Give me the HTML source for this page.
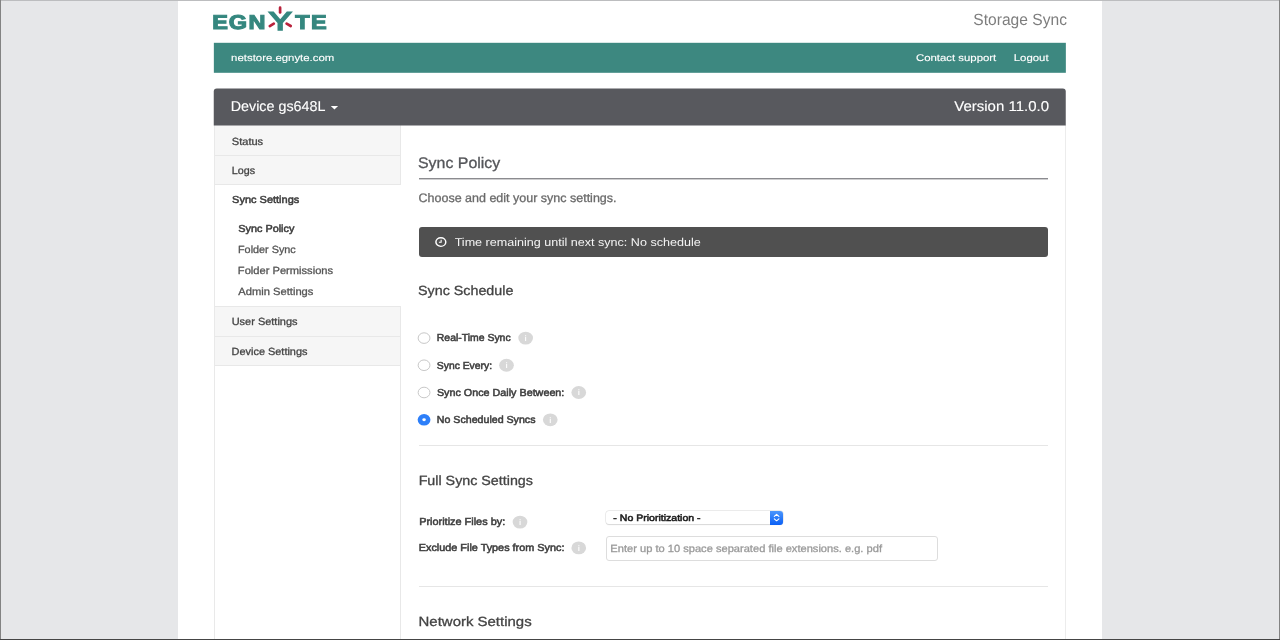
<!DOCTYPE html>
<html lang="en">
<head>
<meta charset="utf-8">
<title>Storage Sync - Sync Policy</title>
<style>
*{box-sizing:border-box;margin:0;padding:0}
html,body{width:1280px;height:640px;overflow:hidden}
body{background:#e6e7e9;font-family:"Liberation Sans",sans-serif;color:#444;font-size:11px;position:relative;text-rendering:geometricPrecision}
a{text-decoration:none}
ul{list-style:none}
h1,h2,p,label{font-weight:normal}
/* every label is placed on its own line box and stretched horizontally to the measured width */
.t{position:absolute;display:block;line-height:1;white-space:nowrap;transform-origin:0 0;-webkit-text-stroke:.3px currentColor}
.frame{position:absolute;left:0;top:0;width:1280px;height:640px;pointer-events:none;z-index:10;box-shadow:inset 0 1px 0 #bcbdbf}
.frame:before{content:"";position:absolute;left:0;top:0;width:1280px;height:640px;box-shadow:inset 1px 0 0 #838383,inset -1px 0 0 #838383}
.frame:after{content:"";position:absolute;left:0;bottom:0;width:1280px;height:1px;background:#454545}
.page{position:absolute;left:178px;top:0;width:924px;height:640px;background:#fff;will-change:transform}
.header{position:absolute;left:36px;top:0;width:852px;height:43px}
.logo{position:absolute;left:-4px;top:0;overflow:visible}
.topnav{position:absolute;left:36px;top:43px;width:852px;height:30px;background:#3d8880;transform:translate(-.15px,-.2px)}
.devicebar{position:absolute;left:36px;top:88px;width:852px;height:37px;background:#58595e;border-radius:3px 3px 0 0;transform:translate(-.25px,.5px);z-index:1}
.devicebar .caret{position:absolute;left:115px;top:16px}
.panel{position:absolute;left:36px;top:125px;width:852px;height:515px;border-left:1px solid #e9e9e9;border-right:1px solid #ececec;background:#fff}
.sidebar{position:absolute;left:0;top:0;width:186px;height:515px}
.sidebar:after{content:"";position:absolute;left:185px;top:241px;width:1px;height:274px;background:#e8e8e8}
.sidebar .item{position:absolute;left:0;width:186px;background:#f6f6f6;border-bottom:1px solid #e8e8e8;border-right:1px solid #e8e8e8}
.sidebar .group{position:absolute;left:0;width:186px;background:#fff;border-bottom:1px solid #e8e8e8}
#i_status{top:0;height:31px}
#i_logs{top:31px;height:29px}
#i_sync{top:60px;height:122px}
#i_user{top:182px;height:30px}
#i_dev{top:212px;height:29px}
.content{position:absolute;left:204px;top:0;width:629px;height:515px}
.rule{position:absolute;left:0;top:53px;width:629px;height:2px;background:linear-gradient(#8b8b8f 0,#8b8b8f 50%,rgba(139,139,143,.42) 50%,rgba(139,139,143,.42) 100%)}
.alert{position:absolute;left:0;top:102px;width:629px;height:30px;background:#505050;border-radius:3px}
.alert .clock{position:absolute;left:16px;top:9px}
.hr{position:absolute;left:0;width:629px;height:1px;background:#e6e6e6}
#hr1{top:320px}
#hr2{top:461px}
.opt,.row{position:absolute;left:0;width:629px;height:27px}
#o1{top:200px}
#o2{top:227px}
#o3{top:254px}
#o4{top:281px}
#row1{top:383px}
#row2{top:410px}
.radio,.info{position:absolute;overflow:visible}
.select{position:absolute;left:187px;top:3px;width:177px;height:13px;border-radius:3px;background:#fff;box-shadow:0 0 0 .5px #dcdcdc,0 .7px 1px rgba(0,0,0,.16)}
.select .btn{position:absolute;right:0;top:0;width:13px;height:13.5px;border-radius:0 3px 3px 0;background:linear-gradient(#4b96fc,#0b60f5)}
.select .btn svg{display:block}
.input{position:absolute;left:187px;top:1px;width:332px;height:25px;border:1px solid #ddd;border-radius:3px;background:#fff}

/* text placement: size, colour and horizontal fit of every label */
#product{left:759px;top:12px;font-size:16.2px;color:#7d7d7d;transform:translateX(0.34px) scaleX(0.9630);-webkit-text-stroke-width:0}
#domain{left:17px;top:11px;font-size:9.7px;color:#fff;transform:translateX(0.27px) scaleX(1.1754);-webkit-text-stroke-width:.12px}
#contact{left:702px;top:11px;font-size:9.7px;color:#fff;transform:translateX(0.09px) scaleX(1.1746);-webkit-text-stroke-width:.12px}
#logout{left:799px;top:11px;font-size:9.7px;color:#fff;transform:translateX(0.90px) scaleX(1.1750);-webkit-text-stroke-width:.12px}
#device{left:16px;top:11px;font-size:14.2px;color:#fff;transform:translateX(0.99px) scaleX(1.0081);-webkit-text-stroke-width:.12px}
#version{left:740px;top:11px;font-size:14.2px;color:#fff;transform:translateX(0.58px) scaleX(1.0555);-webkit-text-stroke-width:.12px}
#n_status{left:16px;top:13px;font-size:10.4px;color:#444;transform:translateX(0.86px) scaleX(1.0613)}
#n_logs{left:16px;top:11px;font-size:10.4px;color:#444;transform:translateX(0.77px) scaleX(1.0309)}
#n_sync{left:17px;top:11px;font-size:10.2px;color:#3e3e3e;transform:translateX(0.08px) scaleX(1.0784);-webkit-text-stroke-width:.52px}
#n_policy{left:23px;top:40px;font-size:10.2px;color:#3e3e3e;transform:translateX(0.30px) scaleX(1.0646);-webkit-text-stroke-width:.52px}
#n_fsync{left:23px;top:61px;font-size:10.4px;color:#555;transform:translateX(0.01px) scaleX(1.0412)}
#n_fperm{left:22px;top:82px;font-size:10.4px;color:#555;transform:translateX(0.85px) scaleX(1.0708)}
#n_admin{left:23px;top:103px;font-size:10.4px;color:#555;transform:translateX(0.35px) scaleX(1.0734)}
#n_user{left:16px;top:11px;font-size:10.4px;color:#444;transform:translateX(0.68px) scaleX(1.0558)}
#n_dev{left:16px;top:11px;font-size:10.4px;color:#444;transform:translateX(0.60px) scaleX(1.0505)}
#h1{left:-2px;top:31px;font-size:15.3px;color:#55565a;transform:translateX(0.95px) scaleX(1.0414)}
#lead{left:-1px;top:67px;font-size:12.3px;color:#6a6a6a;transform:translateX(0.56px) scaleX(1.0161)}
#alert_t{left:35px;top:11px;font-size:11.3px;color:#f4f4f4;transform:translateX(0.63px) scaleX(1.1123);-webkit-text-stroke-width:0}
#h2a{left:-1px;top:159px;font-size:13.3px;color:#444;transform:translateX(0.00px) scaleX(1.0751)}
#r1{left:17px;top:9px;font-size:10.2px;color:#3e3e3e;transform:translateX(0.79px) scaleX(1.0246);-webkit-text-stroke-width:.52px}
#r2{left:17px;top:10px;font-size:10.2px;color:#3e3e3e;transform:translateX(0.86px) scaleX(1.0150);-webkit-text-stroke-width:.52px}
#r3{left:17px;top:10px;font-size:10.2px;color:#3e3e3e;transform:translateX(0.88px) scaleX(1.0569);-webkit-text-stroke-width:.52px}
#r4{left:17px;top:10px;font-size:10.2px;color:#3e3e3e;transform:translateX(0.84px) scaleX(1.0429);-webkit-text-stroke-width:.52px}
#h2b{left:-1px;top:349px;font-size:13.3px;color:#444;transform:translateX(0.63px) scaleX(1.0738)}
#l_prio{left:0px;top:10px;font-size:10.2px;color:#3e3e3e;transform:translateX(0.14px) scaleX(1.0708);-webkit-text-stroke-width:.52px}
#l_excl{left:-1px;top:9px;font-size:10.2px;color:#3e3e3e;transform:translateX(0.76px) scaleX(1.0644);-webkit-text-stroke-width:.52px}
#sel_t{left:7px;top:3px;font-size:9.3px;color:#1c1c1c;transform:translateX(0.37px) scaleX(1.1323);-webkit-text-stroke-width:.52px}
#ph{left:3px;top:8px;font-size:10.4px;color:#9a9a9a;transform:translateX(0.37px) scaleX(1.0686)}
#h2c{left:-1px;top:490px;font-size:13.3px;color:#444;transform:translateX(0.54px) scaleX(1.1252)}
</style>
</head>
<body>
<div class="page">
  <header class="header">
    <svg class="logo" width="124" height="36" viewBox="0 0 124 36" role="img" aria-label="EGNYTE">
      <title>EGNYTE</title>
      <g stroke="#b8213b" stroke-width="2.7" stroke-linecap="round" fill="none">
        <path d="M70.1 7.7V12.4"/><path d="M59.8 26.1L63.8 23.6"/><path d="M76.6 23.6L80.7 26"/>
      </g>
      <text transform="scale(1.17 1)" x="1.90 16.13 32.83" y="28.53" font-family="Liberation Sans, sans-serif" font-weight="bold" font-size="20.06" fill="#35877f" stroke="#35877f" stroke-width="1.15" stroke-linejoin="miter">EGN<tspan x="50.24" y="30.20" font-size="25.58" font-weight="normal" stroke-width="1.6" textLength="19.61" lengthAdjust="spacingAndGlyphs">Y</tspan><tspan x="72.93 86.41" y="28.53">TE</tspan></text>
    </svg>
    <div id="product" class="t">Storage Sync</div>
  </header>
  <nav class="topnav">
    <span id="domain" class="t">netstore.egnyte.com</span>
    <a id="contact" class="t" href="#">Contact support</a>
    <a id="logout" class="t" href="#">Logout</a>
  </nav>
  <div class="devicebar">
    <a id="device" class="t" href="#">Device gs648L</a>
    <svg class="caret" width="12" height="8" viewBox="0 0 12 8"><path d="M2.05 1.4H9.35L5.7 5.1Z" fill="#fff"/></svg>
    <span id="version" class="t">Version 11.0.0</span>
  </div>
  <div class="panel">
    <ul class="sidebar">
      <li class="item" id="i_status"><a id="n_status" class="t" href="#">Status</a></li>
      <li class="item" id="i_logs"><a id="n_logs" class="t" href="#">Logs</a></li>
      <li class="group" id="i_sync"><a id="n_sync" class="t" href="#">Sync Settings</a>
        <ul>
          <li><a id="n_policy" class="t" href="#">Sync Policy</a></li>
          <li><a id="n_fsync" class="t" href="#">Folder Sync</a></li>
          <li><a id="n_fperm" class="t" href="#">Folder Permissions</a></li>
          <li><a id="n_admin" class="t" href="#">Admin Settings</a></li>
        </ul>
      </li>
      <li class="item" id="i_user"><a id="n_user" class="t" href="#">User Settings</a></li>
      <li class="item" id="i_dev"><a id="n_dev" class="t" href="#">Device Settings</a></li>
    </ul>
    <main class="content">
      <h1 id="h1" class="t">Sync Policy</h1>
      <div class="rule"></div>
      <p id="lead" class="t">Choose and edit your sync settings.</p>
      <div class="alert">
        <svg class="clock" width="12" height="12" viewBox="0 0 12 12"><ellipse cx="5.85" cy="6" rx="4.95" ry="4.35" fill="none" stroke="#fff" stroke-width="1.45"/><path d="M6.15 3.7V6.2H3.9" fill="none" stroke="#fff" stroke-width="1.1"/></svg>
        <span id="alert_t" class="t">Time remaining until next sync: No schedule</span>
      </div>
      <h2 id="h2a" class="t">Sync Schedule</h2>
      <div class="opt" id="o1"><svg class="radio" width="16" height="14" viewBox="0 0 16 14" style="left:-3px;top:6px"><ellipse cx="8.05" cy="7.10" rx="5.9" ry="5.3" fill="#fff" stroke="#c8c8c8" stroke-width="1"/></svg><label id="r1" class="t">Real-Time Sync</label><svg class="info" width="18" height="16" viewBox="0 0 18 16" style="left:97px;top:5px"><ellipse cx="9.65" cy="8.10" rx="7.35" ry="6.4" fill="#d8d8d8"/><text x="9.65" y="11.05" text-anchor="middle" font-family="Liberation Sans, sans-serif" font-weight="bold" font-size="7.8" fill="#fff" fill-opacity=".92">i</text></svg></div>
      <div class="opt" id="o2"><svg class="radio" width="16" height="14" viewBox="0 0 16 14" style="left:-3px;top:6px"><ellipse cx="8.05" cy="7.25" rx="5.9" ry="5.3" fill="#fff" stroke="#c8c8c8" stroke-width="1"/></svg><label id="r2" class="t">Sync Every:</label><svg class="info" width="18" height="16" viewBox="0 0 18 16" style="left:78px;top:5px"><ellipse cx="9.50" cy="8.25" rx="7.35" ry="6.4" fill="#d8d8d8"/><text x="9.50" y="11.20" text-anchor="middle" font-family="Liberation Sans, sans-serif" font-weight="bold" font-size="7.8" fill="#fff" fill-opacity=".92">i</text></svg></div>
      <div class="opt" id="o3"><svg class="radio" width="16" height="14" viewBox="0 0 16 14" style="left:-3px;top:6px"><ellipse cx="8.05" cy="7.50" rx="5.9" ry="5.3" fill="#fff" stroke="#c8c8c8" stroke-width="1"/></svg><label id="r3" class="t">Sync Once Daily Between:</label><svg class="info" width="18" height="16" viewBox="0 0 18 16" style="left:150px;top:5px"><ellipse cx="9.75" cy="8.50" rx="7.35" ry="6.4" fill="#d8d8d8"/><text x="9.75" y="11.45" text-anchor="middle" font-family="Liberation Sans, sans-serif" font-weight="bold" font-size="7.8" fill="#fff" fill-opacity=".92">i</text></svg></div>
      <div class="opt" id="o4"><svg class="radio" width="16" height="14" viewBox="0 0 16 14" style="left:-3px;top:6px"><ellipse cx="8.05" cy="7.80" rx="6.4" ry="5.8" fill="#2d7ff9"/><ellipse cx="8.05" cy="7.80" rx="1.75" ry="1.45" fill="#fff"/></svg><label id="r4" class="t">No Scheduled Syncs</label><svg class="info" width="18" height="16" viewBox="0 0 18 16" style="left:122px;top:5px"><ellipse cx="9.25" cy="8.80" rx="7.35" ry="6.4" fill="#d8d8d8"/><text x="9.25" y="11.75" text-anchor="middle" font-family="Liberation Sans, sans-serif" font-weight="bold" font-size="7.8" fill="#fff" fill-opacity=".92">i</text></svg></div>
      <div class="hr" id="hr1"></div>
      <h2 id="h2b" class="t">Full Sync Settings</h2>
      <div class="row" id="row1">
        <label id="l_prio" class="t">Prioritize Files by:</label><svg class="info" width="18" height="16" viewBox="0 0 18 16" style="left:92px;top:6px"><ellipse cx="9.00" cy="8.10" rx="7.35" ry="6.4" fill="#d8d8d8"/><text x="9.00" y="11.05" text-anchor="middle" font-family="Liberation Sans, sans-serif" font-weight="bold" font-size="7.8" fill="#fff" fill-opacity=".92">i</text></svg>
        <div class="select"><span id="sel_t" class="t">- No Prioritization -</span><span class="btn"><svg width="13" height="13" viewBox="0 0 13 13"><path d="M4.3 5.3L6.6 3.3L8.9 5.3M4.3 7.8L6.6 9.8L8.9 7.8" fill="none" stroke="#fff" stroke-width="1.1" stroke-linecap="round" stroke-linejoin="round"/></svg></span></div>
      </div>
      <div class="row" id="row2">
        <label id="l_excl" class="t">Exclude File Types from Sync:</label><svg class="info" width="18" height="16" viewBox="0 0 18 16" style="left:150px;top:4px"><ellipse cx="9.75" cy="8.90" rx="7.35" ry="6.4" fill="#d8d8d8"/><text x="9.75" y="11.85" text-anchor="middle" font-family="Liberation Sans, sans-serif" font-weight="bold" font-size="7.8" fill="#fff" fill-opacity=".92">i</text></svg>
        <div class="input"><span id="ph" class="t">Enter up to 10 space separated file extensions. e.g. pdf</span></div>
      </div>
      <div class="hr" id="hr2"></div>
      <h2 id="h2c" class="t">Network Settings</h2>
    </main>
  </div>
</div>
<div class="frame"></div>
</body>
</html>
